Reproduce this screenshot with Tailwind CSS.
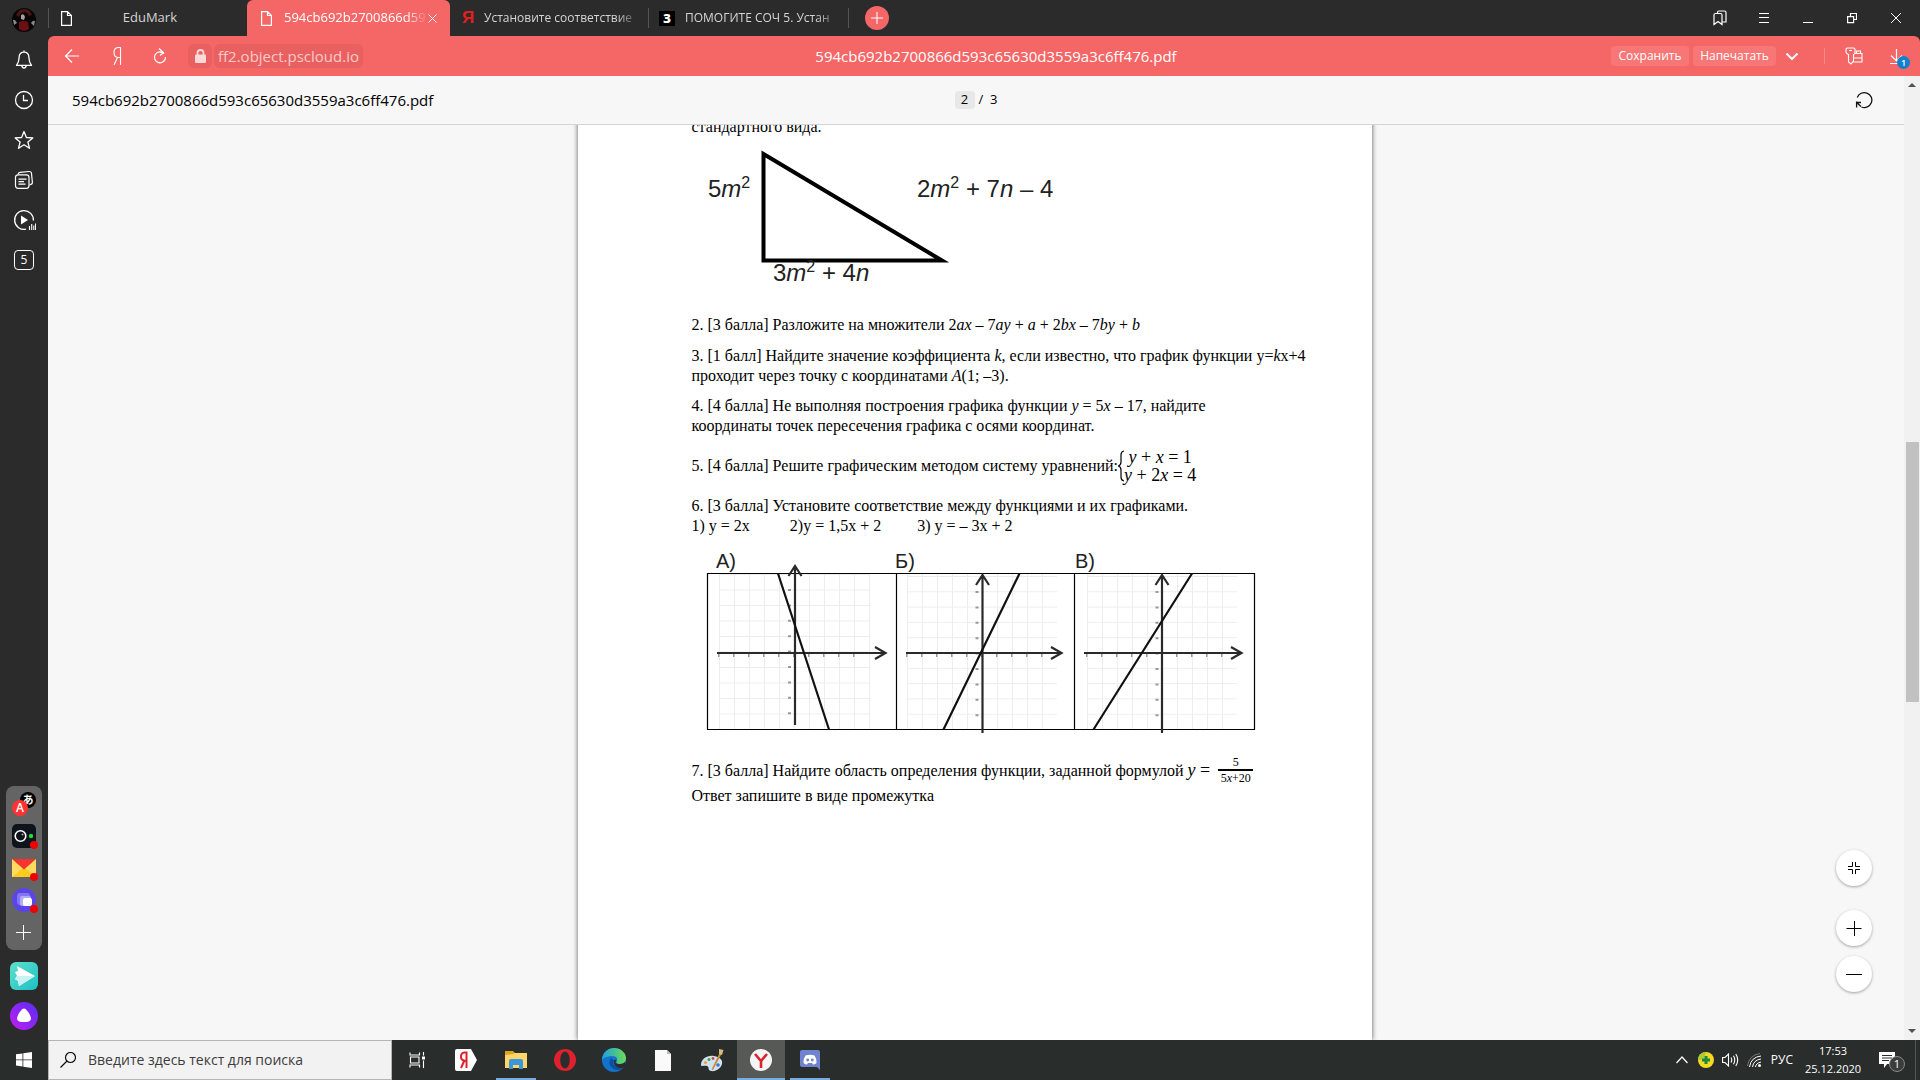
<!DOCTYPE html>
<html lang="ru">
<head>
  <meta charset="UTF-8">
  <meta name="viewport" content="width=device-width, initial-scale=1.0">
  <title>594cb692b2700866d593c65630d3559a3c6ff476.pdf</title>
  <script src="https://cdn.jsdelivr.net/npm/@tailwindcss/browser@4"></script>
</head>
<body class="h-screen flex flex-col overflow-hidden bg-[#2b2b2b] text-white font-['Open_Sans','Noto_Sans_CJK_JP',sans-serif]">

  <div class="flex flex-1 min-h-0">

    <!-- Sidebar -->
    <aside class="w-12 shrink-0 flex flex-col items-center">
      <button class="h-10 w-12 flex items-center justify-center" aria-label="Профиль">
        <svg class="size-6" viewBox="0 0 24 24"><circle cx="12" cy="12" r="12" fill="#080506"/><path d="M4 7q3-6 8-6 6 0 8 6l-3 1q-2-4-5-4-4 0-5 5z" fill="#4d1414"/><path d="M9 7q3-2 4 2l-1 3-3-1z" fill="#b09c98"/><path d="M7 14q5-2 9 0l1 7q-5 4-10 0z" fill="#6b0f12"/><path d="M1 12q2-1 4 3l-3 2zM23 13q-2-1-4 2l3 3z" fill="#89898b"/></svg>
      </button>
      <button class="h-10 w-12 flex items-center justify-center" aria-label="Уведомления">
        <svg class="size-5" viewBox="0 0 20 20" fill="none" stroke="#fff" stroke-width="1.3" stroke-linejoin="round" stroke-linecap="round"><path d="M10 2.2c-3.300 0-4.800 2.300-4.900 5.200C5 11 4.500 12.500 2.500 15.400h15C15.500 12.500 15 11 14.900 7.400 14.800 4.500 13.300 2.200 10 2.200zM10 1v1M7.800 15.600c.3 1.700 1.200 2.400 2.200 2.400s1.900-.7 2.200-2.400"/></svg>
      </button>
      <button class="h-10 w-12 flex items-center justify-center" aria-label="История">
        <svg class="size-5" viewBox="0 0 20 20" fill="none" stroke="#fff" stroke-width="1.3"><circle cx="10" cy="10" r="8.500"/><path d="M9.500 5v5.500H14"/></svg>
      </button>
      <button class="h-10 w-12 flex items-center justify-center" aria-label="Избранное">
        <svg class="size-5" viewBox="0 0 20 20" fill="none" stroke="#fff" stroke-width="1.3" stroke-linejoin="round"><path d="M10 1.500l2.400 6 6.400.4-4.900 4.100 1.600 6.300L10 14.800l-5.500 3.500 1.600-6.300L1.200 7.900l6.400-.4z"/></svg>
      </button>
      <button class="h-10 w-12 flex items-center justify-center" aria-label="Коллекции">
        <svg class="size-5" viewBox="0 0 20 20" fill="none" stroke="#fff" stroke-width="1.2"><rect x="1.500" y="4.800" width="13.500" height="13.500" rx="2.500"/><path d="M4 4.500C4.200 3 5 2.500 6 2.400l9-.9c1.500-.1 2.400.6 2.500 2l.9 9c.1 1.300-.8 2-3 2.500M4.500 9.200h8M4.500 11.700h5.500M4.500 14.200h7"/></svg>
      </button>
      <button class="h-10 w-12 flex items-center justify-center" aria-label="Видео">
        <svg class="size-6" viewBox="0 0 24 24" fill="none" stroke="#fff" stroke-width="1.300"><path d="M14 21.200A9.400 9.400 0 1 1 21.400 12.500"/><path d="M9 7.500l7 4.500-7 4.500z" fill="#fff" stroke="none"/><path d="M17.500 22v-4M19.700 22v-6M21.800 22v-4.500M23.600 22v-6.500" stroke-width="1.100"/></svg>
      </button>
      <button class="h-10 w-12 flex items-center justify-center" aria-label="Вкладки">
        <span class="size-5 rounded-sm border border-white text-xs leading-[18px]">5</span>
      </button>

      <div class="mt-auto w-9 rounded-lg bg-[#646464] py-[2px] flex flex-col items-center">
        <button class="h-8 flex items-center" aria-label="Переводчик">
          <svg class="size-6" viewBox="0 0 24 24" font-family="Open Sans, Noto Sans CJK JP, sans-serif" text-anchor="middle"><circle cx="16" cy="8" r="8" fill="#000"/><text x="16" y="12" font-size="11" font-weight="700" fill="#fff">あ</text><circle cx="8" cy="16" r="8" fill="#f33"/><text x="8" y="20" font-size="12" font-weight="600" fill="#fff">A</text></svg>
        </button>
        <button class="h-8 flex items-center" aria-label="Камера">
          <svg class="size-6 overflow-visible" viewBox="0 0 24 24"><rect width="24" height="24" rx="5" fill="#0d141b"/><circle cx="8.500" cy="12" r="5.300" fill="none" stroke="#fff" stroke-width="1.600"/><circle cx="10.500" cy="10.500" r="1" fill="#aaa"/><circle cx="19" cy="12" r="2.200" fill="#22d83a"/><circle cx="22" cy="21" r="4" fill="#f00000"/></svg>
        </button>
        <button class="h-8 flex items-center" aria-label="Почта">
          <svg class="size-6 overflow-visible" viewBox="0 0 24 24"><path d="M0 3h24v18H0z" fill="#ffcc1d"/><path d="M0 3v18L11 12z" fill="#ffdb61"/><path d="M24 3v18L13 12z" fill="#ffdb61"/><path d="M0 3h24L12 13.500z" fill="#f7352e"/><circle cx="22" cy="21" r="4" fill="#f00000"/></svg>
        </button>
        <button class="h-8 flex items-center" aria-label="Мессенджер">
          <svg class="size-6 overflow-visible" viewBox="0 0 24 24"><circle cx="12" cy="12" r="12" fill="#5b45e8"/><rect x="5" y="5" width="13" height="12" rx="3" fill="#8475f0"/><rect x="8" y="8" width="11" height="10" rx="2" fill="#b4abf7"/><rect x="11" y="10" width="9" height="8" rx="2" fill="#fff"/><circle cx="22" cy="21" r="4" fill="#f00000"/></svg>
        </button>
        <button class="h-8 flex items-center" aria-label="Добавить">
          <svg class="size-4" viewBox="0 0 16 16" stroke="#fff"><path d="M0 8.500h15M7.500 1v15"/></svg>
        </button>
      </div>
      <button class="mt-[6px] h-10 flex items-center" aria-label="Турбо">
        <svg class="size-7" viewBox="0 0 28 28"><defs><linearGradient id="plane" x2="1" y2="1"><stop stop-color="#5fe0cc"/><stop offset="1" stop-color="#1dbfc4"/></linearGradient></defs><rect width="28" height="28" rx="6" fill="url(#plane)"/><path d="M7 4l18 10L9 24l-1-5-3-2 2-3-2-4 3-1z" fill="#fff"/><path d="M7 14h18L9 24l-1-5-3-2z" fill="#c9f3f2"/></svg>
      </button>
      <button class="mb-1 h-10 flex items-center" aria-label="Алиса">
        <svg class="size-7" viewBox="0 0 28 28"><defs><linearGradient id="alice" x1="0" y1="1" x2="1" y2="0"><stop stop-color="#c01ef2"/><stop offset="1" stop-color="#5a2cf5"/></linearGradient></defs><circle cx="14" cy="14" r="14" fill="url(#alice)"/><path d="M14 6.500c2.500 0 7 7 7 10S17.500 20 14 20s-7-.5-7-3.500 4.500-10 7-10z" fill="#fff"/></svg>
      </button>
    </aside>

    <div class="flex-1 min-w-0 flex flex-col">

      <!-- Tabs -->
      <header class="h-9 shrink-0 flex items-center text-[13px] text-[#d5d5d5]">
        <a href="#" class="w-[199px] h-5 shrink-0 flex items-center border-l border-[#555] pl-3 pr-[70px]">
          <svg class="h-[15px] w-[11px]" viewBox="0 0 11 15" fill="none" stroke="#fff" stroke-width="1.200"><path d="M.6.600h5.900l3.900 3.900v9.900H.6zM6.500.600v3.900h3.900"/></svg>
          <span class="flex-1 text-right">EduMark</span>
        </a>
        <a href="#" class="w-[203px] h-9 shrink-0 flex items-center rounded-t-md bg-[#f56666] pl-[14px] pr-[13px] text-white">
          <svg class="h-[15px] w-[11px] shrink-0" viewBox="0 0 11 15" fill="none" stroke="#fff" stroke-width="1.200"><path d="M.6.600h5.900l3.900 3.900v9.900H.6zM6.500.600v3.900h3.900"/></svg>
          <span class="ml-3 flex-1 overflow-hidden whitespace-nowrap mask-r-from-85%">594cb692b2700866d59</span>
          <svg class="size-[9px] shrink-0" viewBox="0 0 9 9" stroke="#fff"><path d="M.5.500l8 8M8.500.500l-8 8"/></svg>
        </a>
        <a href="#" class="w-[199px] h-5 shrink-0 flex items-center border-r border-[#555] pl-3 pr-2">
          <span class="w-3 text-[17px] leading-5 font-bold text-[#e02020] font-['Liberation_Sans',sans-serif]">Я</span>
          <span class="ml-[10px] flex-1 overflow-hidden whitespace-nowrap mask-r-from-85% text-xs leading-5">Установите соответствие</span>
        </a>
        <a href="#" class="w-[200px] h-5 shrink-0 flex items-center border-r border-[#555] pl-[10px] pr-2">
          <span class="w-4 h-[15px] bg-black text-center text-xs leading-[15px] font-extrabold text-white">З</span>
          <span class="ml-[10px] flex-1 overflow-hidden whitespace-nowrap mask-r-from-85% text-xs leading-5">ПОМОГИТЕ СОЧ 5. Устан</span>
        </a>
        <button class="ml-4 size-6 rounded-full bg-[#f56666] flex items-center justify-center" aria-label="Новая вкладка">
          <svg class="size-3" viewBox="0 0 12 12" stroke="#fff"><path d="M0 6h12M6 0v12"/></svg>
        </button>
        <div class="ml-auto flex pr-[2px]">
          <button class="w-11 flex justify-center" aria-label="Закладки">
            <svg class="h-4 w-[14px]" viewBox="0 0 14 16" fill="none" stroke="#fff" stroke-width="1.200"><path d="M1 14.500V5q0-1.500 1.500-1.500h5Q9 3.500 9 5v9.500l-4-3zM4.500 3.500V2.300Q4.500 1 6 1h5.500Q13 1 13 2.500V12H9"/></svg>
          </button>
          <button class="w-11 flex justify-center" aria-label="Меню">
            <svg class="h-4 w-[10px]" viewBox="0 0 10 16" stroke="#fff"><path d="M0 3.500h10M0 7.500h10M0 12.500h10"/></svg>
          </button>
          <button class="w-11 flex justify-center" aria-label="Свернуть">
            <svg class="h-4 w-[10px]" viewBox="0 0 10 16" stroke="#fff"><path d="M0 12.500h10"/></svg>
          </button>
          <button class="w-11 flex justify-center" aria-label="Восстановить">
            <svg class="h-4 w-[10px]" viewBox="0 0 10 16" fill="none" stroke="#fff" stroke-width="1.200"><path d="M.6 6.600h6v6h-6zM3.500 6.500v-3h6v6h-3"/></svg>
          </button>
          <button class="w-11 flex justify-center" aria-label="Закрыть">
            <svg class="h-4 w-[10px]" viewBox="0 0 10 16" stroke="#fff"><path d="M0 3l10 10M10 3L0 13"/></svg>
          </button>
        </div>
      </header>

      <!-- Address bar -->
      <div class="h-10 shrink-0 flex items-center rounded-t-md bg-[#f56666]">
        <div class="flex-1 flex items-center pl-4">
          <button class="w-4" aria-label="Назад"><svg class="h-4 w-4" viewBox="0 0 16 16" fill="none" stroke="#fff" stroke-width="1.200"><path d="M15 8H1.500M8 1.500L1.500 8 8 14.500"/></svg></button>
          <button class="ml-8 w-3" aria-label="Яндекс"><svg class="h-5 w-3" viewBox="0 0 12 20" fill="none" stroke="#fff" stroke-width="1.100"><path d="M8.500 19V1.500H6Q2 1.800 2 6.500T6 11.500h2.500M5.500 11.500L2 19"/></svg></button>
          <button class="ml-7 w-4" aria-label="Обновить"><svg class="h-4 w-4" viewBox="0 0 16 16" fill="none" stroke="#fff" stroke-width="1.200"><path d="M12 5.500A5.500 5.500 0 1 0 13.500 9M7 .500L11.500 4.500 8 7.500M11.500 4.500H8"/></svg></button>
          <button class="ml-5 h-6 w-6 rounded-md bg-[#e86060] flex items-center justify-center" aria-label="Защита"><svg class="h-[14px] w-[11px]" viewBox="0 0 11 14"><rect y="5.500" width="11" height="8.500" rx="1" fill="#ffd9d9"/><path d="M2.500 6V4a3 3 0 0 1 6 0v2" fill="none" stroke="#ffd9d9" stroke-width="1.800"/></svg></button>
          <a href="#" class="ml-[2px] h-6 rounded-md bg-[#e86060] px-1 text-[15px] leading-6 text-[#ffc9c9]">ff2.object.pscloud.io</a>
        </div>
        <h1 class="ml-2 text-[15px]">594cb692b2700866d593c65630d3559a3c6ff476.pdf</h1>
        <div class="flex-1 flex items-center justify-end">
          <div class="flex items-center gap-1 text-xs">
            <button class="h-5 w-[78px] rounded bg-[#f77676]">Сохранить</button>
            <button class="h-5 w-[83px] rounded bg-[#f77676]">Напечатать</button>
            <button class="w-6 flex justify-center" aria-label="Ещё"><svg class="h-[7px] w-3" viewBox="0 0 12 7" fill="none" stroke="#fff" stroke-width="2"><path d="M.5.500L6 6 11.500.500"/></svg></button>
          </div>
          <div class="ml-5 h-4 w-px bg-[#f88a8a]"></div>
          <button class="ml-5 w-[18px]" aria-label="Пароли"><svg class="h-[18px] w-[18px]" viewBox="0 0 18 18" fill="none" stroke="#fff" stroke-width="1.100"><path d="M2.500 1h6q1.500 0 1.500 1.500v3Q10 7 8.500 7.500V14L6 17l-2.500-2V7.500Q1 6.500 1 5V2.500Q1 1 2.500 1zM4 3.500h3M10 6.500h7v8.500H8.500M11.500 6.500V4h4v2.500M8.500 11H17"/></svg></button>
          <button class="relative ml-[26px] mr-[15px] w-4" aria-label="Загрузки">
            <svg class="h-4 w-4" viewBox="0 0 16 16" fill="none" stroke="#fff" stroke-width="1.200"><path d="M7.500 1v11.500M2 7.500l5.500 5.500 5.500-5.500M1 15.500h8"/></svg>
            <span class="absolute left-2 top-2 size-[13px] rounded-full bg-[#1180cf] text-[9px] leading-[13px] font-semibold">1</span>
          </button>
        </div>
      </div>

      <div class="flex-1 min-h-0 flex bg-[#f7f7f7] text-black">
        <div class="relative flex-1 min-w-0 flex flex-col">

          <!-- Viewer bar -->
          <div class="relative z-10 h-[49px] shrink-0 flex items-center border-b border-[#d4d4d4] bg-[#f7f7f7] text-[15px]">
            <h2 class="flex-1 pl-6">594cb692b2700866d593c65630d3559a3c6ff476.pdf</h2>
            <div class="flex items-center text-[13px]">
              <label for="page" class="sr-only">Страница</label>
              <input id="page" value="2" class="h-[18px] w-5 rounded bg-[#e8e8e8] text-center">
              <span class="ml-1">/&nbsp; 3</span>
            </div>
            <div class="flex-1 flex justify-end pr-6">
              <button class="mr-[7px]" aria-label="Повернуть"><svg class="size-[18px]" viewBox="0 0 18 18" fill="none" stroke="#111" stroke-width="1.300"><path d="M2.300 6.500A7.500 7.500 0 1 1 6.500 16M1 11.500h5M1.600 16.500v-5L6 15.500"/></svg></button>
            </div>
          </div>

          <!-- Page -->
          <main class="flex-1 min-h-0 overflow-hidden flex justify-center">
            <article class="-mt-2 mr-[3px] w-[794px] shrink-0 bg-white pl-[114px] shadow-[0_0_5px_rgba(0,0,0,0.65)] text-base leading-5 font-['Liberation_Serif',serif]">
              <p>стандартного вида.</p>
              <svg class="mt-2 block h-[150px] w-[400px]" viewBox="692 145 400 150" font-family="Liberation Sans, sans-serif" font-size="24" fill="#222">
                <path d="M763.500 154L763.500 260.500L942 260.500z" fill="none" stroke="#000" stroke-width="4"/>
                <text x="708" y="197">5<tspan font-style="italic">m</tspan><tspan font-size="16" dy="-9">2</tspan></text>
                <text x="917" y="197">2<tspan font-style="italic">m</tspan><tspan font-size="16" dy="-9">2</tspan><tspan dy="9"> + 7</tspan><tspan font-style="italic">n</tspan> – 4</text>
                <text x="773" y="281">3<tspan font-style="italic">m</tspan><tspan font-size="16" dy="-9">2</tspan><tspan dy="9"> + 4</tspan><tspan font-style="italic">n</tspan></text>
              </svg>
              <p class="mt-5">2. [3 балла] Разложите на множители 2<i>ax</i> – 7<i>ay</i> + <i>a</i> + 2<i>bx</i> – 7<i>by</i> + <i>b</i></p>
              <p class="mt-[11px]">3. [1 балл] Найдите значение коэффициента <i>k</i>, если известно, что график функции y=<i>k</i>x+4<br>проходит через точку с координатами <i>A</i>(1; –3).</p>
              <p class="mt-[10px]">4. [4 балла] Не выполняя построения графика функции <i>y</i> = 5<i>x</i> – 17, найдите<br>координаты точек пересечения графика с осями координат.</p>
              <div class="mt-3 flex items-center">
                <p>5. [4 балла] Решите графическим методом систему уравнений:</p>
                <svg class="h-8 w-[6px]" viewBox="0 0 6 32" fill="none" stroke="#000" stroke-width="1.200"><path d="M6 1Q3 1.500 3 5v7q0 3-2.500 4Q3 17 3 20v7q0 3.500 3 4"/></svg>
                <p class="text-lg leading-[18px] text-center"><i>y</i> + <i>x</i> = 1<br><i>y</i> + 2<i>x</i> = 4</p>
              </div>
              <p class="mt-3">6. [3 балла] Установите соответствие между функциями и их графиками.</p>
              <p class="flex"><span class="mr-10">1) y = 2x</span><span class="mr-9">2)y = 1,5x + 2</span><span>3) y = – 3x + 2</span></p>
              <svg class="mt-[15px] block h-[184px] w-[570px]" viewBox="692 550 570 184" font-family="Liberation Sans, sans-serif" fill="none" stroke="#000">
                <defs>
                  <pattern id="gridA" x="719" y="573" width="15" height="15.500" patternUnits="userSpaceOnUse"><path d="M.5 0v15.500M0 .500h15" stroke="#ededed"/></pattern>
                  <pattern id="gridB" x="907" y="575" width="15" height="15.300" patternUnits="userSpaceOnUse"><path d="M.5 0v15.300M0 .500h15" stroke="#ededed"/></pattern>
                  <pattern id="gridC" x="1087" y="575" width="15" height="15.300" patternUnits="userSpaceOnUse"><path d="M.5 0v15.300M0 .500h15" stroke="#ededed"/></pattern>
                </defs>
                <g stroke="none">
                  <rect x="719" y="573" width="151" height="155" fill="url(#gridA)"/>
                  <rect x="907" y="573" width="150" height="155" fill="url(#gridB)"/>
                  <rect x="1087" y="573" width="150" height="155" fill="url(#gridC)"/>
                </g>
                <path d="M707.500 572.500h547v156h-547zM896.500 572.500v156M1074.500 572.500v156" stroke-width="1.200"/>
                <!-- tick marks -->
                <g stroke="#999" stroke-width="3" stroke-dasharray="1.500 13.500">
                  <path d="M718 654.500h150M906 654.500h146M1086 654.500h148"/>
                  <path d="M789.500 588v138M977 590v134M1157 590v134" stroke-dasharray="2 13.400"/>
                </g>
                <g stroke="#2a2a2a" stroke-width="2.200">
                  <path d="M717 652h168M875 646l10.500 6-10.500 6M906 652h156M1051 646l10.500 6-10.500 6M1084 652h157M1231 646l10.500 6-10.500 6"/>
                  <path d="M795 566v158M788.500 575l6.500-10 6.500 10M982.500 575v157M976 584l6.500-10 6.500 10M1162 575v157M1155.500 584l6.500-10 6.500 10"/>
                </g>
                <path d="M778 572.500l51 156M943.500 728.500l76-156M1093.500 728.500l98.500-156" stroke="#111" stroke-width="2.200"/>
                <g stroke="none" fill="#222" font-size="20">
                  <text x="716" y="567">А)</text><text x="895" y="567">Б)</text><text x="1075" y="567">В)</text>
                </g>
              </svg>
              <div class="mt-5 flex items-center">
                <p>7. [3 балла] Найдите область определения функции, заданной формулой <span class="text-lg leading-5"><i>y</i> =</span></p>
                <div class="ml-2 w-[35px] text-center text-xs leading-[14px]">
                  <div class="border-b-2 border-black">5</div>
                  <div class="whitespace-nowrap">5<i>x</i>+20</div>
                </div>
              </div>
              <p class="mt-[1px]">Ответ запишите в виде промежутка</p>
              <div class="h-[400px]"></div>
            </article>
          </main>

          <!-- Zoom buttons -->
          <div class="absolute right-8 bottom-12 flex flex-col">
            <button class="size-9 rounded-full bg-white shadow-[0_1px_3px_rgba(0,0,0,0.35)] flex items-center justify-center" aria-label="По размеру страницы">
              <svg class="size-3" viewBox="0 0 12 12" fill="none" stroke="#000"><path d="M0 4.500h4.500V0M7.500 0v4.500H12M0 7.500h4.500V12M12 7.500H7.500V12"/></svg>
            </button>
            <button class="mt-6 size-9 rounded-full bg-white shadow-[0_1px_3px_rgba(0,0,0,0.35)] flex items-center justify-center" aria-label="Увеличить">
              <svg class="size-4" viewBox="0 0 16 16" stroke="#000"><path d="M.5 8.500h15M8.500 1v15"/></svg>
            </button>
            <button class="mt-[10px] size-9 rounded-full bg-white shadow-[0_1px_3px_rgba(0,0,0,0.35)] flex items-center justify-center" aria-label="Уменьшить">
              <svg class="size-4" viewBox="0 0 16 16" stroke="#000"><path d="M0 8.500h16"/></svg>
            </button>
          </div>
        </div>

        <!-- Scrollbar -->
        <div class="w-4 shrink-0 flex flex-col items-center justify-between bg-[#f1f1f1] py-[7px]">
          <svg class="h-1 w-2" viewBox="0 0 8 4"><path d="M0 4l4-4 4 4z" fill="#505050"/></svg>
          <div class="mt-7 h-[260px] w-[13px] bg-[#c1c1c1]"></div>
          <svg class="h-1 w-2" viewBox="0 0 8 4"><path d="M0 0l4 4 4-4z" fill="#505050"/></svg>
        </div>
      </div>
    </div>
  </div>

  <!-- Taskbar -->
  <footer class="h-10 shrink-0 flex items-center bg-[#292d2b]">
    <button class="w-12 flex justify-center" aria-label="Пуск">
      <svg class="size-4" viewBox="0 0 16 16" fill="#fff"><path d="M0 2.300L6.500 1.400v6.100H0zM7.300 1.300L16 0v7.500H7.300zM0 8.300h6.500v6.100L0 13.600zM7.300 8.300H16V16l-8.700-1.300z"/></svg>
    </button>
    <label class="h-10 w-[344px] flex items-center border border-[#b5b5b5] bg-[#f2f2f2] pl-[11px]">
      <svg class="size-4 shrink-0" viewBox="0 0 16 16" fill="none" stroke="#111" stroke-width="1.200"><circle cx="10.500" cy="5.500" r="5"/><path d="M7 9L.500 15.500"/></svg>
      <input type="text" placeholder="Введите здесь текст для поиска" class="ml-3 flex-1 min-w-0 text-sm placeholder:text-[#3c3c3c]">
    </label>
    <button class="w-[49px] flex justify-center" aria-label="Представление задач">
      <svg class="size-4" viewBox="0 0 16 16" fill="none" stroke="#fff" stroke-width="1.100"><path d="M1 .500v2.500h9.500V.500M1 15.500V13h9.500v2.500M1.500 5h8.500v6H1.500zM14.500 0v3.500M14.500 8.500V16"/><path d="M13 4.500h3v3h-3z" fill="#fff" stroke="none"/></svg>
    </button>
    <button class="w-[50px] flex justify-center" aria-label="Яндекс">
      <svg class="size-[22px]" viewBox="0 0 22 22" fill="none"><path d="M2 0h14l6 11-6 11H2q-2 0-2-2V2q0-2 2-2z" fill="#fff"/><path d="M11.500 19V3.500H9.500Q6 3.800 6 7.500t3.500 4.200h2M9.200 12L6 19" stroke="#e0202c" stroke-width="2"/></svg>
    </button>
    <button class="relative h-10 w-[49px] flex items-center justify-center" aria-label="Проводник">
      <svg class="h-[18px] w-[22px]" viewBox="0 0 22 18"><path d="M0 0h8l2 2h11v4H0z" fill="#e0a51a"/><path d="M0 4l8-1 2-1h12v15H0z" fill="#ffd667"/><path d="M4 18v-8q0-2 2-2h10q2 0 2 2v8h-4v-4H8v4z" fill="#3a96dd"/></svg>
      <span class="absolute bottom-0 h-[2px] w-10 bg-[#76aee2]"></span>
    </button>
    <button class="w-[49px] flex justify-center" aria-label="Opera">
      <svg class="size-[22px]" viewBox="0 0 22 22"><path fill-rule="evenodd" d="M11 0a11 11 0 1 0 0 22 11 11 0 0 0 0-22zm0 2.500c2.700 0 4.700 3.600 4.700 8.500s-2 8.500-4.700 8.500-4.700-3.600-4.700-8.500 2-8.500 4.700-8.500z" fill="#e1202f"/></svg>
    </button>
    <button class="w-[49px] flex justify-center" aria-label="Edge">
      <svg class="size-6" viewBox="0 0 24 24"><defs><linearGradient id="edge" x2="1"><stop stop-color="#1a9fe0"/><stop offset="1" stop-color="#6fdc52"/></linearGradient></defs><circle cx="12" cy="12" r="12" fill="#1373cc"/><path d="M0 11C1 4 6 0 12 0c7 0 12 5 12 10 0 4-3 6-6 6-4 0-4-2-3-3 1-2-.5-5-4.500-5C6 8 2 9.500 0 12z" fill="url(#edge)"/><path d="M9 10c-4 5 0 12 7 12 2 0 4-1 5-3-5 2-11-1-9.500-7z" fill="#0c4f9c"/><path d="M14 13c-1 1-1 3 4 3 2 0 4-1 5-2l1 3-3 3c-6 1-10-3-9-8q2-1 2 1z" fill="#292d2b"/></svg>
    </button>
    <button class="w-[49px] flex justify-center" aria-label="Документ">
      <svg class="h-[21px] w-4" viewBox="0 0 16 21"><path d="M0 0h12l4 4v17H0z" fill="#fafafa"/><path d="M12 0v4h4" fill="#bbb"/></svg>
    </button>
    <button class="w-[50px] flex justify-center" aria-label="Paint">
      <svg class="size-[23px]" viewBox="0 0 23 23"><path d="M0 16C0 10 6 6 13 7c6 1 9 4 8 8s-6 8-11 7c-4-1-1-4-4-5-2-1-6 1-6-1z" fill="#cfe2f2"/><circle cx="4.500" cy="13.500" r="1.600" fill="#e9a23b"/><circle cx="8" cy="10.500" r="1.500" fill="#3f9e4a"/><circle cx="12" cy="9.500" r="1.400" fill="#d64541"/><circle cx="17" cy="16" r="1.800" fill="#3c78c4"/><path d="M19 3l2 1L12 21l-1.500-.5z" fill="#c98a3c"/><path d="M18 0l4.500 1-1.500 5-3-1z" fill="#d9b982"/></svg>
    </button>
    <button class="relative h-10 w-12 flex items-center justify-center bg-[#575957]" aria-label="Яндекс.Браузер">
      <svg class="size-[22px]" viewBox="0 0 22 22"><circle cx="11" cy="11" r="11" fill="#f5f5f5"/><path d="M5 5l6 7 6-7M11 12v7" fill="none" stroke="#d9232e" stroke-width="2.600"/></svg>
      <span class="absolute bottom-0 h-[2px] w-12 bg-[#76aee2]"></span>
    </button>
    <button class="relative h-10 w-[50px] flex items-center justify-center" aria-label="Discord">
      <svg class="size-5" viewBox="0 0 20 20"><path d="M2 0h16q2 0 2 2v18l-3-3H2q-2 0-2-2V2q0-2 2-2z" fill="#6f83cf"/><path d="M5.500 5.500Q10 4 14.500 5.500 17 9 16.500 13q-2 1.500-3.500 1.500l-1-1.500H8l-1 1.500Q5.500 14.500 3.500 13 3 9 5.500 5.500z" fill="#fff"/><circle cx="7.700" cy="10" r="1.400" fill="#6f83cf"/><circle cx="12.300" cy="10" r="1.400" fill="#6f83cf"/></svg>
      <span class="absolute bottom-0 h-[2px] w-10 bg-[#76aee2]"></span>
    </button>

    <div class="ml-auto h-10 flex items-center gap-2 text-xs">
      <button class="w-4" aria-label="Скрытые значки"><svg class="h-4 w-4" viewBox="0 0 16 16" fill="none" stroke="#fff" stroke-width="1.200"><path d="M2.500 11L8 5l5.500 6"/></svg></button>
      <svg class="size-4" viewBox="0 0 16 16"><circle cx="8" cy="8" r="8" fill="#f5d922"/><path d="M8 0a8 8 0 0 0-8 8q6 1 8-8z" fill="#a8cc3a"/><path d="M8 4v8M4 8h8" stroke="#188a3a" stroke-width="3"/></svg>
      <svg class="h-4 w-[17px]" viewBox="0 0 17 16" fill="none" stroke="#fff" stroke-width="1.100"><path d="M.6 5.500h2.400L6.500 2v12L3 10.500H.6zM9 5.500q1.500 2.500 0 5M11.500 3.800q2.500 4.200 0 8.400M13.800 2q3.800 6 0 12"/></svg>
      <svg class="size-4" viewBox="0 0 16 16" fill="none" stroke="#fff"><path d="M2.500 15Q4 5 14 4M5.500 15Q6.500 8 14 7M8.500 15Q9 11 14 10" /><path d="M.5 14Q2 3 13 1.500" stroke="#777"/><circle cx="12.500" cy="13.500" r="1.500" fill="#fff" stroke="none"/></svg>
      <span>РУС</span>
      <div class="ml-1 w-[56px] text-center text-[11px] leading-[18px]">17:53<br>25.12.2020</div>
      <button class="relative ml-[10px] mr-[2px] w-[26px] h-6" aria-label="Уведомления">
        <svg class="h-4 w-4" viewBox="0 0 16 16"><path d="M0 0h16v12H8l-3 4v-4H0z" fill="#fff"/><path d="M3 3.500h10M3 6h10M3 8.500h7" stroke="#292d2b"/></svg>
        <span class="absolute right-0 bottom-0 size-4 rounded-full border border-[#888] bg-[#3a3d3b] text-[11px] leading-[14px]">1</span>
      </button>
      <div class="mr-1 h-10 w-px bg-[#555]"></div>
    </div>
  </footer>
</body>
</html>
